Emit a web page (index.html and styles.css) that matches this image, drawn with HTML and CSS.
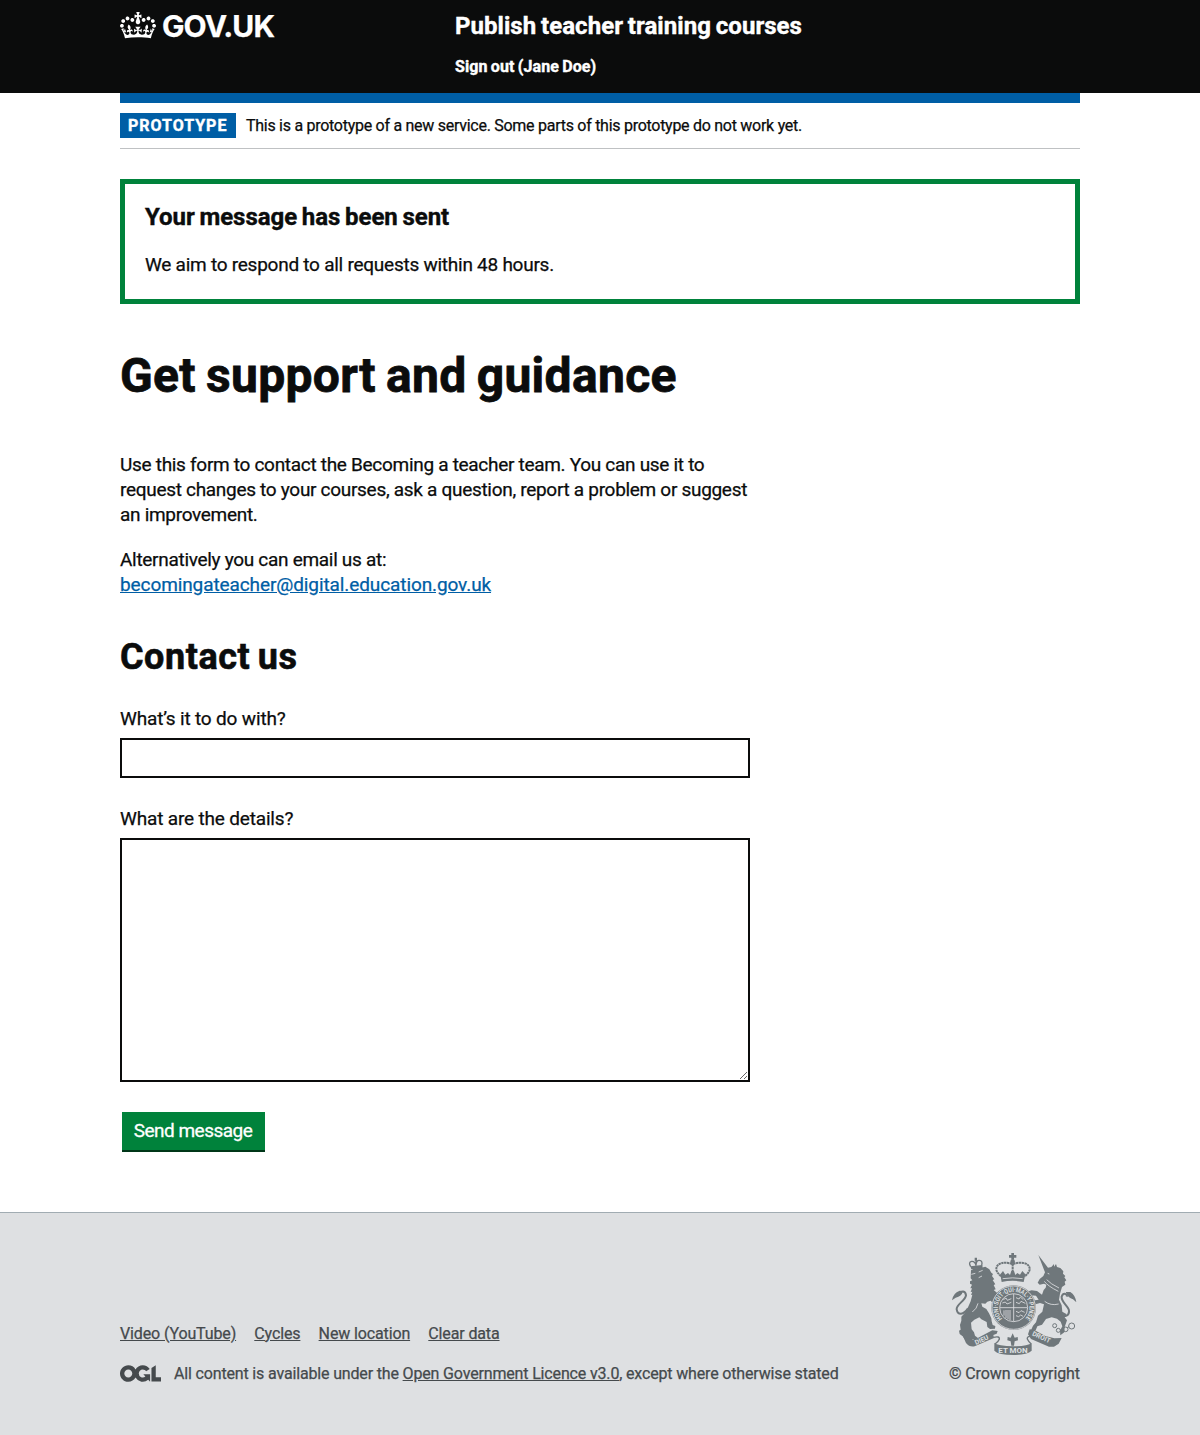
FILE: index.html
```html
<!DOCTYPE html>
<html lang="en">
<head>
<meta charset="utf-8">
<title>Get support and guidance</title>
<link rel="stylesheet" href="styles.css">
</head>
<body>
<header class="header">
  <div class="container header-grid">
    <a class="logo" href="#">
      <svg class="crown" viewBox="0 0 132 97" width="36" height="26.5" aria-hidden="true"><path fill="currentColor" fill-rule="evenodd" d="M25 30.2c3.5 1.5 7.7-.2 9.1-3.7 1.5-3.6-.2-7.8-3.9-9.2-3.6-1.4-7.6.3-9.1 3.9-1.4 3.5.3 7.5 3.9 9zM9 39.5c3.6 1.5 7.8-.2 9.2-3.7 1.5-3.6-.2-7.8-3.9-9.1-3.6-1.5-7.6.2-9.1 3.8-1.4 3.5.3 7.5 3.8 9zM4.4 57.2c3.5 1.5 7.7-.2 9.1-3.8 1.5-3.6-.2-7.7-3.9-9.1-3.5-1.5-7.6.3-9.1 3.8-1.4 3.5.3 7.6 3.9 9.1zm38.3-21.4c3.5 1.5 7.7-.2 9.1-3.8 1.5-3.6-.2-7.7-3.9-9.1-3.6-1.5-7.6.3-9.1 3.8-1.3 3.6.4 7.7 3.9 9.1zm64.4-5.6c-3.6 1.5-7.8-.2-9.1-3.7-1.5-3.6.2-7.8 3.8-9.2 3.6-1.4 7.7.3 9.2 3.9 1.3 3.5-.4 7.5-3.9 9zm15.9 9.3c-3.6 1.5-7.7-.2-9.1-3.7-1.5-3.6.2-7.8 3.7-9.1 3.6-1.5 7.7.2 9.2 3.8 1.5 3.5-.3 7.5-3.8 9zm4.7 17.7c-3.6 1.5-7.8-.2-9.2-3.8-1.5-3.6.2-7.7 3.9-9.1 3.6-1.5 7.7.3 9.2 3.8 1.3 3.5-.4 7.6-3.9 9.1zM89.3 35.8c-3.6 1.5-7.8-.2-9.2-3.8-1.4-3.6.2-7.7 3.9-9.1 3.6-1.5 7.7.3 9.2 3.8 1.4 3.6-.3 7.7-3.9 9.1zM69.7 17.7l8.9 4.7V9.3l-8.9 2.8c-.2-.3-.5-.6-.9-.9L72.4 0H59.6l3.5 11.2c-.3.3-.6.5-.9.9l-8.8-2.8v13.1l8.8-4.7c.3.3.6.7.9.9l-5 15.4v.1c-.2.8-.4 1.6-.4 2.4 0 4.1 3.1 7.5 7 8.1h.2c.3 0 .7.1 1 .1.4 0 .7 0 1-.1h.2c4-.6 7.1-4.1 7.1-8.1 0-.8-.1-1.7-.4-2.4V34l-5.1-15.4c.4-.2.7-.6 1-.9zM66 92.8c16.9 0 32.8 1.1 47.1 3.2 4-16.9 8.9-26.7 14-33.5l-9.6-3.4c1 4.9 1.1 7.2 0 10.2-1.5-1.4-3-4.3-4.2-8.7L108.6 76c2.8-2 5-3.2 7.5-3.3-4.4 9.4-10 11.9-13.6 11.2-4.3-.8-6.3-4.6-5.6-7.9 1-4.7 5.7-5.9 8-.5 4.3-8.7-3-11.4-7.6-8.8 7.1-7.2 7.9-13.5 2.1-21.1-8 6.1-8.1 12.3-4.5 20.8-4.7-5.4-12.1-2.5-9.5 6.2 3.4-5.2 7.9-2 7.2 3.1-.6 4.3-6.4 7.8-13.5 7.2-10.3-.9-10.9-8-11.2-13.8 2.5-.5 7.1 1.8 11 7.3L80.2 60c-4.1 4.4-8 5.3-12.3 5.4 1.4-4.4 8-11.6 8-11.6H55.5s6.4 7.2 7.9 11.6c-4.2-.1-8-1-12.3-5.4l1.4 16.4c3.9-5.5 8.5-7.7 10.9-7.3-.3 5.8-.9 12.8-11.1 13.8-7.2.6-12.9-2.9-13.5-7.2-.7-5 3.8-8.3 7.1-3.1 2.7-8.7-4.6-11.6-9.4-6.2 3.7-8.5 3.6-14.7-4.6-20.8-5.8 7.6-5 13.9 2.2 21.1-4.7-2.6-11.9.1-7.7 8.8 2.3-5.5 7.1-4.2 8.1.5.7 3.3-1.3 7.1-5.7 7.9-3.5.7-9-1.8-13.5-11.2 2.5.1 4.7 1.3 7.5 3.3l-4.7-15.4c-1.2 4.4-2.7 7.2-4.3 8.7-1.1-3-.9-5.3 0-10.2l-9.5 3.4c5 6.9 9.9 16.7 14 33.5 14.8-2.1 30.8-3.2 47.7-3.2z"/></svg>
      <span class="logo-text">GOV.UK</span>
    </a>
    <div class="header-content">
      <a class="service-name" href="#">Publish teacher training courses</a>
      <a class="sign-out" href="#">Sign out (Jane Doe)</a>
    </div>
  </div>
</header>
<div class="container">
  <div class="phase-banner">
    <strong class="phase-tag">PROTOTYPE</strong>
    <span class="phase-text">This is a prototype of a new service. Some parts of this prototype do not work yet.</span>
  </div>
  <main class="main">
    <section class="success">
      <h2 class="success-title">Your message has been sent</h2>
      <p class="success-text">We aim to respond to all requests within 48 hours.</p>
    </section>
    <h1 class="title">Get support and guidance</h1>
    <div class="column">
      <p class="body">Use this form to contact the Becoming a teacher team. You can use it to<br>request changes to your courses, ask a question, report a problem or suggest<br>an improvement.</p>
      <p class="body">Alternatively you can email us at:<br><a class="email" href="#">becomingateacher@digital.education.gov.uk</a></p>
      <h2 class="subtitle">Contact us</h2>
      <form>
        <label class="label" for="subject">What’s it to do with?</label>
        <input class="input" id="subject" type="text">
        <label class="label" for="details">What are the details?</label>
        <textarea class="textarea" id="details"></textarea>
        <button class="button" type="button">Send message</button>
      </form>
    </div>
  </main>
</div>
<footer class="footer">
  <div class="container footer-row">
    <div class="footer-main">
      <nav class="footer-links">
        <a href="#">Video (YouTube)</a><a href="#">Cycles</a><a href="#">New location</a><a href="#">Clear data</a>
      </nav>
      <div class="licence">
        <svg class="ogl" viewBox="0 0 483.2 195.7" width="41" height="17" aria-hidden="true"><path fill="currentColor" d="M421.5 142.8V.1l-50.7 32.3v161.1h112.4v-50.7zm-122.3-9.6A47.12 47.12 0 0 1 221 97.8c0-26 21.1-47.1 47.1-47.1 16.7 0 31.4 8.7 39.7 21.8l42.7-27.2A97.63 97.63 0 0 0 268.1 0c-36.5 0-68.3 20.1-85.1 49.7A98 98 0 0 0 97.8 0C43.9 0 0 43.9 0 97.8s43.9 97.8 97.8 97.8c36.5 0 68.3-20.1 85.1-49.7a97.76 97.76 0 0 0 149.6 25.4l19.4 22.2h3v-87.8h-80l24.3 27.5zM97.8 145c-26 0-47.1-21.1-47.1-47.1s21.1-47.1 47.1-47.1 47.1 21.1 47.1 47.1S123.8 145 97.8 145"/></svg>
        <span>All content is available under the <a class="ogl-link" href="#">Open Government Licence v3.0</a>, except where otherwise stated</span>
      </div>
    </div>
    <div class="copyright">
      <svg class="crest" viewBox="30 36 390 312" width="130" height="104" aria-hidden="true">
        <g class="ink">
          <!-- centre crown -->
          <path d="M214 39h8v6h7v8h-7v6h-8v-6h-7v-8h7z"/><circle cx="218" cy="65" r="7"/>
          <path class="beads" d="M216 72C196 64 168 68 169 88C170 98 177 102 184 110M220 72C240 64 270 68 269 88C268 98 260 102 254 110M218 72v26"/>
          <path d="M181 103l8-10 7 11 8-5 6 6 4-12h8l4 12 6-6 8 5 7-11 9 10-5 23q-33-7-66 0z"/>
          <!-- garter and shield -->
          <circle cx="221" cy="203" r="67"/>
          <!-- lion -->
          <path d="M91 79l36-4 1 9-34 4zM104 53h7v9h-7z"/>
          <path class="lion-crown" d="M92 80q-8-14 3-16 10-1 13 12 1-16 10-15 11 1 7 15M108 60v18"/>
          <path d="M93 91l11-6 20-2 12-3 12 8 6 10 5 4-3 6 7 10-5 2 8 13-5 2 6 13-6 2 14 12-3 8 8 8-4 8-9-2-6 8-9-10-10 3-6 6-12-1 3 10 12 7 8 13 7 15 1 9 3 11 8 3-1 8-15 1-8-6-2-15-16-8-6-6-15 7-10 9 2 20 7 9 3 10 8 6-2 8-9 2-3-7-5 8-8 1-1-8-11 1-6-9-9-7-2-10 5-3-2-14 4-13 0-12 11-12 8-14 9-20 5-20-4 1 4-10-5 1 4-11-5 0 5-11-6-3 0-7 7-3-5-6z"/>
          <!-- unicorn -->
          <path d="M295 45l29 38 10-2 8-9 0 8 6-8 3 9 10 3 9 10-1 7 7 7-3 4 6 9-5 4 2 9-10 7-6 20-3 18 8 17 2 19 12 7-5 10 7 9-7 20-1 16-12 9-1-14 7-13-5-14-11-9-16-4-17 5-12 17-14 5-5 12-8 4-6-4 6-14 9-10 6-20 13-12 5-22-12-4-11 3-10 4-4 13-6-2-1-17 17-9 11-2-8-12-15-1-4 8-11-4 7-16 10-3 16 2 15 11 5-14 6-7 2-9-7-3-13 3-6-6 6-11 11-9 5-11z"/>
          <!-- ribbon -->
          <path d="M70 291l32 9 55-29 16 2-3 8-10 4 2 9-58 25q-16 3-26-10z"/>
          <path d="M269 268l14 2 33 18 27 7 22-1-9 17-14 9-15 0-54-23-9-14z"/>
          <path d="M163 309q10 9 58 10 42 0 54-10v23q-14 12-54 13-46 0-58-13z"/>
          <path class="fold" d="M160 292q20-5 18 6-2 6-13 14M280 290q-20-4-18 7 3 7 11 14"/>
          <path d="M218 280l6 13 9-2 1 10-10 3-2 13h-8l-2-13-10-3 1-10 9 2z"/>
        </g>
        <g class="stroke">
          <path d="M84 205C70 226 53 226 50 208C48 194 76 182 78 166C77 152 62 151 62 161M356 222C374 236 391 226 386 208C380 194 363 184 365 170C370 156 384 162 380 170"/>
        </g>
        <path class="ink" d="M36 181q3-22 23-29l10 1q-4 17-22 20zM409 187q-3-22-18-31l-14 0q7 18 22 22z"/>
        <g class="chain"><circle cx="344" cy="257" r="6"/><circle cx="355" cy="271" r="6"/><circle cx="377" cy="268" r="7"/><circle cx="395" cy="258" r="9"/><path d="M361 270l9-2M382 263l5-3"/></g>
        <g class="paper">
          <circle cx="221" cy="203" r="65"/><circle cx="221" cy="203" r="42"/>
          <path d="M221 162v82M180 203h82"/>
          <path d="M190 179l8-5 4 7 12-5M187 189l9-3 5 6 13-5M228 173l9 4 4-6 9 8M228 187l10 4 5-7 13 6M228 214l9 4 6-6 11 5M228 227l8 3 6-5 7 4M192 211v16M198 210v24M204 210v28M210 210v30"/>
          <path d="M94 103l12-3M116 96l12-5M116 113l10-5"/>
          <path d="M313 124q10 14 42 30M320 119q12 13 37 25M323 100l5 2"/>
          <path d="M188 116q30-5 60 0"/>
          <path d="M97 216q14-10 17-26M314 184q18 14 42 8"/>
        </g>
        <path id="garter" fill="none" d="M187 236A47.4 47.4 0 1 1 255 236"/>
        <path id="ribbon-left" fill="none" d="M108 315L165 289"/>
        <path id="ribbon-right" fill="none" d="M275 286L338 314"/>
        <text class="motto"><textPath href="#garter" textLength="220" lengthAdjust="spacingAndGlyphs">HONI·SOIT·QUI·MAL·Y·PENSE</textPath></text>
        <text class="motto"><textPath href="#ribbon-left">DIEU</textPath></text>
        <text class="motto"><textPath href="#ribbon-right">DROIT</textPath></text>
        <text class="motto motto-centre" x="175" y="340" textLength="88" lengthAdjust="spacingAndGlyphs">ET MON</text>
      </svg>
      <a class="copyright-text" href="#">© Crown copyright</a>
    </div>
  </div>
</footer>
</body>
</html>
```
FILE: styles.css
```css
* { box-sizing: border-box; }
body { margin: 0; background: #fff; color: #0b0c0c; font-family: Roboto, "Liberation Sans", sans-serif; font-weight: 450; -webkit-text-stroke: 0.25px; }
h1, h2, p { margin: 0; }
.container { width: 960px; margin: 0 auto; }

.header { height: 93px; background: #0b0c0c; color: #fff; }
.header a { color: #fff; text-decoration: none; }
.header-grid { display: flex; padding-top: 11px; }
.logo { display: flex; width: 335px; height: 30px; }
.crown { margin-top: 1px; }
.logo-text { margin-left: 6px; font: 700 30px/30px Inter, sans-serif; letter-spacing: -0.9px; }
.header-content { display: flex; flex-direction: column; gap: 16px; font-weight: 700; -webkit-text-stroke: 0.4px; }
.service-name { font-size: 24px; line-height: 30px; letter-spacing: 0.05px; word-spacing: -1.2px; }
.sign-out { font-size: 16px; line-height: 20px; letter-spacing: 0.09px; word-spacing: -0.8px; }

.phase-banner { display: flex; gap: 10px; border-top: 10px solid #005ea5; border-bottom: 1px solid #bfc1c3; padding: 10px 0; font-size: 16px; line-height: 25px; }
.phase-tag { width: 116px; height: 25px; padding-left: 8px; background: #005ea5; color: #fff; font-weight: 700; letter-spacing: 0.98px; -webkit-text-stroke: 0.4px; }
.phase-text { letter-spacing: -0.275px; white-space: nowrap; }

.main { padding: 30px 0 60px; }
.success { height: 125px; border: 5px solid #00823b; padding: 18px 20px; }
.success-title { font-size: 24px; line-height: 30px; letter-spacing: -0.04px; word-spacing: -1.2px; -webkit-text-stroke: 0.4px; }
.success-text { margin-top: 20px; font-size: 19px; line-height: 25px; letter-spacing: -0.25px; }
.title { margin: 47px 0 51px; font-size: 48px; line-height: 50px; letter-spacing: 0.3px; word-spacing: -2px; -webkit-text-stroke: 0.8px; }
.column { width: 630px; }
.body { margin-bottom: 20px; font-size: 19px; line-height: 25px; letter-spacing: -0.3px; white-space: nowrap; }
.email { color: #005ea5; letter-spacing: -0.1px; }
.subtitle { margin: 40px 0 29px; font-size: 36px; line-height: 40px; letter-spacing: 0.55px; word-spacing: -2px; -webkit-text-stroke: 0.6px; }
.label { display: block; margin-bottom: 7px; font-size: 19px; line-height: 25px; letter-spacing: -0.17px; }
.input, .textarea { display: block; width: 630px; border: 2px solid #0b0c0c; border-radius: 0; background: #fff; }
.input { height: 40px; margin-bottom: 28px; }
.textarea { height: 244px; margin-bottom: 30px; resize: vertical; }
.button { display: block; width: 143px; height: 38px; margin: 0 2px 2px; padding: 0 1px 0 0; border: 0; background: #00823b; box-shadow: 0 2px 0 #003618; color: #fff; font: 450 19px/38px Roboto, sans-serif; letter-spacing: -0.5px; -webkit-text-stroke: 0.3px; }

.footer { height: 223px; border-top: 1px solid #a1acb2; background: #dee0e2; color: #454a4d; font-size: 16px; line-height: 20px; }
.footer a { color: inherit; }
.footer-row { display: flex; justify-content: space-between; align-items: flex-end; padding-top: 39px; }
.footer-links { display: flex; gap: 18.2px; margin-bottom: 20px; letter-spacing: -0.13px; }
.licence { display: flex; align-items: center; gap: 13px; letter-spacing: -0.16px; white-space: nowrap; }
.ogl { margin-top: -1px; }
.copyright { display: flex; flex-direction: column; align-items: flex-end; }
.crest { margin-bottom: 8px; -webkit-text-stroke: 0; }
.footer .copyright-text { text-decoration: none; letter-spacing: -0.08px; }
.ink { fill: #6f777b; }
.beads { fill: none; stroke: #6f777b; stroke-width: 6; stroke-dasharray: 7 1.5; }
.stroke, .fold, .lion-crown { fill: none; stroke: #6f777b; stroke-width: 6; }
.fold, .lion-crown { stroke-width: 4; }
.chain { fill: none; stroke: #6f777b; stroke-width: 3; }
.paper { fill: none; stroke: #dee0e2; stroke-width: 2.5; }
.motto { fill: #dee0e2; font: 700 20px Roboto, sans-serif; }
.motto-centre { font-size: 22px; }
```
